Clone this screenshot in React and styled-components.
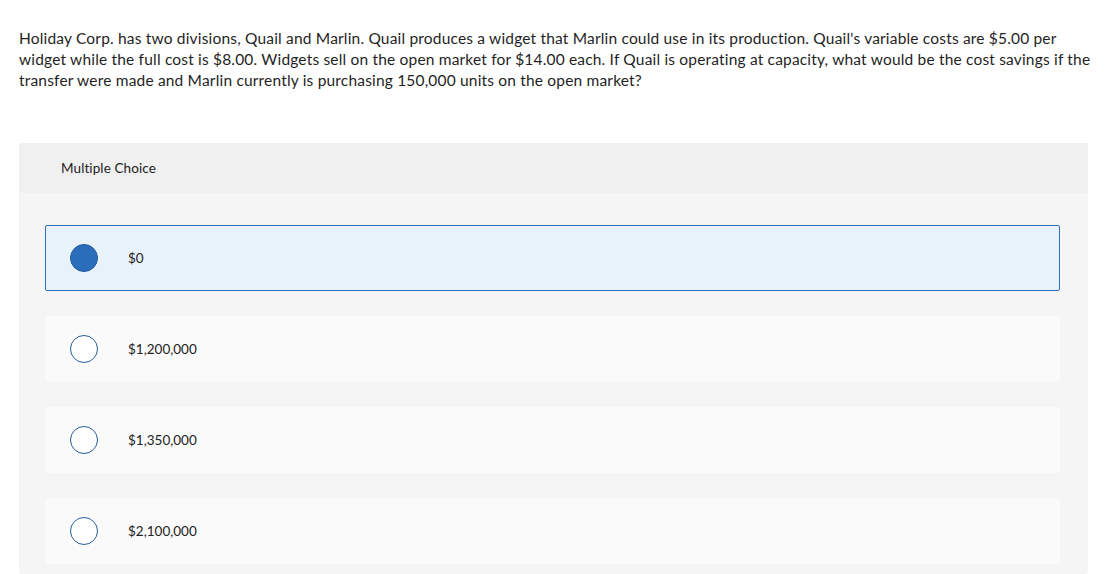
import React from 'react';
import styled, { createGlobalStyle } from 'styled-components';

const GlobalStyle = createGlobalStyle`
  html, body {
    margin: 0;
    padding: 0;
    background: #fff;
  }
  body {
    font-family: Lato, "Open Sans", "Liberation Sans", sans-serif;
    color: #222;
  }
`

const Page = styled.div`
  padding: 28px 32px 0 19px;
  height: 574px;
  box-sizing: border-box;
  overflow: hidden;
`

const Question = styled.p`
  margin: 0;
  font-size: 15.5px;
  line-height: 21px;
  letter-spacing: 0.18px;
  color: #1f1f1f;
  white-space: nowrap;
`

const Panel = styled.section`
  margin-top: 52px;
  background: #f5f5f5;
  border-radius: 2px;
  padding-bottom: 10px;
`

const PanelHeader = styled.div`
  height: 50px;
  display: flex;
  align-items: center;
  padding-left: 42px;
  background: #f0f0f0;
  font-size: 13.5px;
  letter-spacing: 0.1px;
  color: #222;
`

const Choices = styled.ul`
  list-style: none;
  margin: 0;
  padding: 32px 28px 0 26px;
  display: flex;
  flex-direction: column;
  gap: 25px;
`

const Choice = styled.li`
  height: 66px;
  box-sizing: border-box;
  display: flex;
  align-items: center;
  padding-left: 24px;
  border-radius: 2px;
  background: ${p => (p.$selected ? '#e8f2fb' : '#fafafa')};
  border: 1px solid ${p => (p.$selected ? '#2e6fc0' : '#fafafa')};
`

const Radio = styled.span`
  width: 28px;
  height: 28px;
  box-sizing: border-box;
  border-radius: 50%;
  flex: none;
  border: 1.5px solid ${p => (p.$checked ? '#1f5a9e' : '#245f9c')};
  background: ${p => (p.$checked ? '#2a6ebb' : '#fff')};
`

const Label = styled.span`
  margin-left: 30px;
  font-size: 13.5px;
  color: #222;
`

const options = ['$0', '$1,200,000', '$1,350,000', '$2,100,000'];

export default function App() {
  return (
    <>
      <GlobalStyle />
      <Page>
        <Question>
          Holiday Corp. has two divisions, Quail and Marlin. Quail produces a widget that Marlin could use in its production. Quail's variable costs are $5.00 per
          <br />
          widget while the full cost is $8.00. Widgets sell on the open market for $14.00 each. If Quail is operating at capacity, what would be the cost savings if the
          <br />
          transfer were made and Marlin currently is purchasing 150,000 units on the open market?
        </Question>
        <Panel>
          <PanelHeader>Multiple Choice</PanelHeader>
          <Choices>
            {options.map((o, i) => (
              <Choice key={o} $selected={i === 0}>
                <Radio $checked={i === 0} />
                <Label>{o}</Label>
              </Choice>
            ))}
          </Choices>
        </Panel>
      </Page>
    </>
  );
}
